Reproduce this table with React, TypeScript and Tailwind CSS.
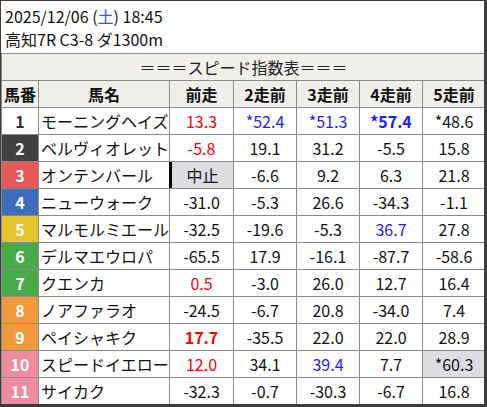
const font = { fontFamily: '"Noto Sans CJK JP", "Noto Sans", sans-serif' };

type Cell = { v: string; c?: "red" | "blue"; b?: boolean; bg?: boolean; stop?: boolean };

const waku: Record<number, string> = {
  1: "bg-white text-[#333]",
  2: "bg-[#404040] text-white",
  3: "bg-[#e85858] text-white",
  4: "bg-[#3e6dbd] text-white",
  5: "bg-[#e6c42e] text-white",
  6: "bg-[#49aa49] text-white",
  7: "bg-[#49aa49] text-white",
  8: "bg-[#f09a3c] text-white",
  9: "bg-[#f09a3c] text-white",
  10: "bg-[#f08c9f] text-white",
  11: "bg-[#f08c9f] text-white",
};

const rows: { no: number; name: string; runs: Cell[] }[] = [
  { no: 1, name: "モーニングヘイズ", runs: [{ v: "13.3", c: "red" }, { v: "*52.4", c: "blue" }, { v: "*51.3", c: "blue" }, { v: "*57.4", c: "blue", b: true }, { v: "*48.6" }] },
  { no: 2, name: "ベルヴィオレット", runs: [{ v: "-5.8", c: "red" }, { v: "19.1" }, { v: "31.2" }, { v: "-5.5" }, { v: "15.8" }] },
  { no: 3, name: "オンテンバール", runs: [{ v: "中止", stop: true }, { v: "-6.6" }, { v: "9.2" }, { v: "6.3" }, { v: "21.8" }] },
  { no: 4, name: "ニューウォーク", runs: [{ v: "-31.0" }, { v: "-5.3" }, { v: "26.6" }, { v: "-34.3" }, { v: "-1.1" }] },
  { no: 5, name: "マルモルミエール", runs: [{ v: "-32.5" }, { v: "-19.6" }, { v: "-5.3" }, { v: "36.7", c: "blue" }, { v: "27.8" }] },
  { no: 6, name: "デルマエウロパ", runs: [{ v: "-65.5" }, { v: "17.9" }, { v: "-16.1" }, { v: "-87.7" }, { v: "-58.6" }] },
  { no: 7, name: "クエンカ", runs: [{ v: "0.5", c: "red" }, { v: "-3.0" }, { v: "26.0" }, { v: "12.7" }, { v: "16.4" }] },
  { no: 8, name: "ノアファラオ", runs: [{ v: "-24.5" }, { v: "-6.7" }, { v: "20.8" }, { v: "-34.0" }, { v: "7.4" }] },
  { no: 9, name: "ペイシャキク", runs: [{ v: "17.7", c: "red", b: true }, { v: "-35.5" }, { v: "22.0" }, { v: "22.0" }, { v: "28.9" }] },
  { no: 10, name: "スピードイエロー", runs: [{ v: "12.0", c: "red" }, { v: "34.1" }, { v: "39.4", c: "blue" }, { v: "7.7" }, { v: "*60.3", bg: true }] },
  { no: 11, name: "サイカク", runs: [{ v: "-32.3" }, { v: "-0.7" }, { v: "-30.3" }, { v: "-6.7" }, { v: "16.8" }] },
];

function RunCell({ cell }: { cell: Cell }) {
  const color = cell.c === "red" ? "text-[#ff0000]" : cell.c === "blue" ? "text-[#1a1aff]" : "text-[#111]";
  const weight = cell.b ? "font-bold" : "font-normal";
  if (cell.stop) {
    return (
      <div className="-ml-px flex h-[26px] items-center justify-center border-l-[3px] border-black bg-[#dcdce1] text-[#111]">
        {cell.v}
      </div>
    );
  }
  return (
    <div className={`flex h-[26px] items-center justify-center ${cell.bg ? "bg-[#dcdce1]" : "bg-white"} ${color} ${weight}`}>
      {cell.v}
    </div>
  );
}

export default function App() {
  const heads = ["前走", "2走前", "3走前", "4走前", "5走前"];
  return (
    <div className="h-[407px] w-[487px] bg-[#3c3c3c] pl-px pr-[3px] pt-px pb-[3px]" style={font}>
      <div className="h-full w-full overflow-hidden bg-white text-[16px] leading-none">
        {/* Title */}
        <div className="flex h-[52px] flex-col justify-center gap-[7px] pl-[4px] text-[#111]">
          <div>
            2025/12/06 (<span className="text-[#3a5ccc]">土</span>) 18:45
          </div>
          <div>高知7R C3-8 ダ1300m</div>
        </div>

        <div className="grid grid-cols-[36px_130px_63px_62px_62px_62px_62px] gap-px border-l border-t border-[#8a8a8a] bg-[#8a8a8a]">
          <div className="col-span-7 flex h-[26px] items-center justify-center bg-[#f0efea] text-[#222]">
            ＝＝＝スピード指数表＝＝＝
          </div>

          <div className="flex h-[26px] items-center justify-center bg-[#f0efea] font-bold text-[#111]">馬番</div>
          <div className="flex h-[26px] items-center justify-center bg-[#f0efea] font-bold text-[#111]">馬名</div>
          {heads.map((h) => (
            <div key={h} className="flex h-[26px] items-center justify-center bg-[#f0efea] font-bold text-[#111]">
              {h}
            </div>
          ))}

          {rows.map((r) => (
            <div key={r.no} className="contents">
              <div className={`flex h-[26px] items-center justify-center font-bold ${waku[r.no]}`}>{r.no}</div>
              <div className="flex h-[26px] items-center whitespace-nowrap bg-white pl-[2px] text-[#111]">{r.name}</div>
              {r.runs.map((c, i) => (
                <RunCell key={i} cell={c} />
              ))}
            </div>
          ))}
        </div>
      </div>
    </div>
  );
}
